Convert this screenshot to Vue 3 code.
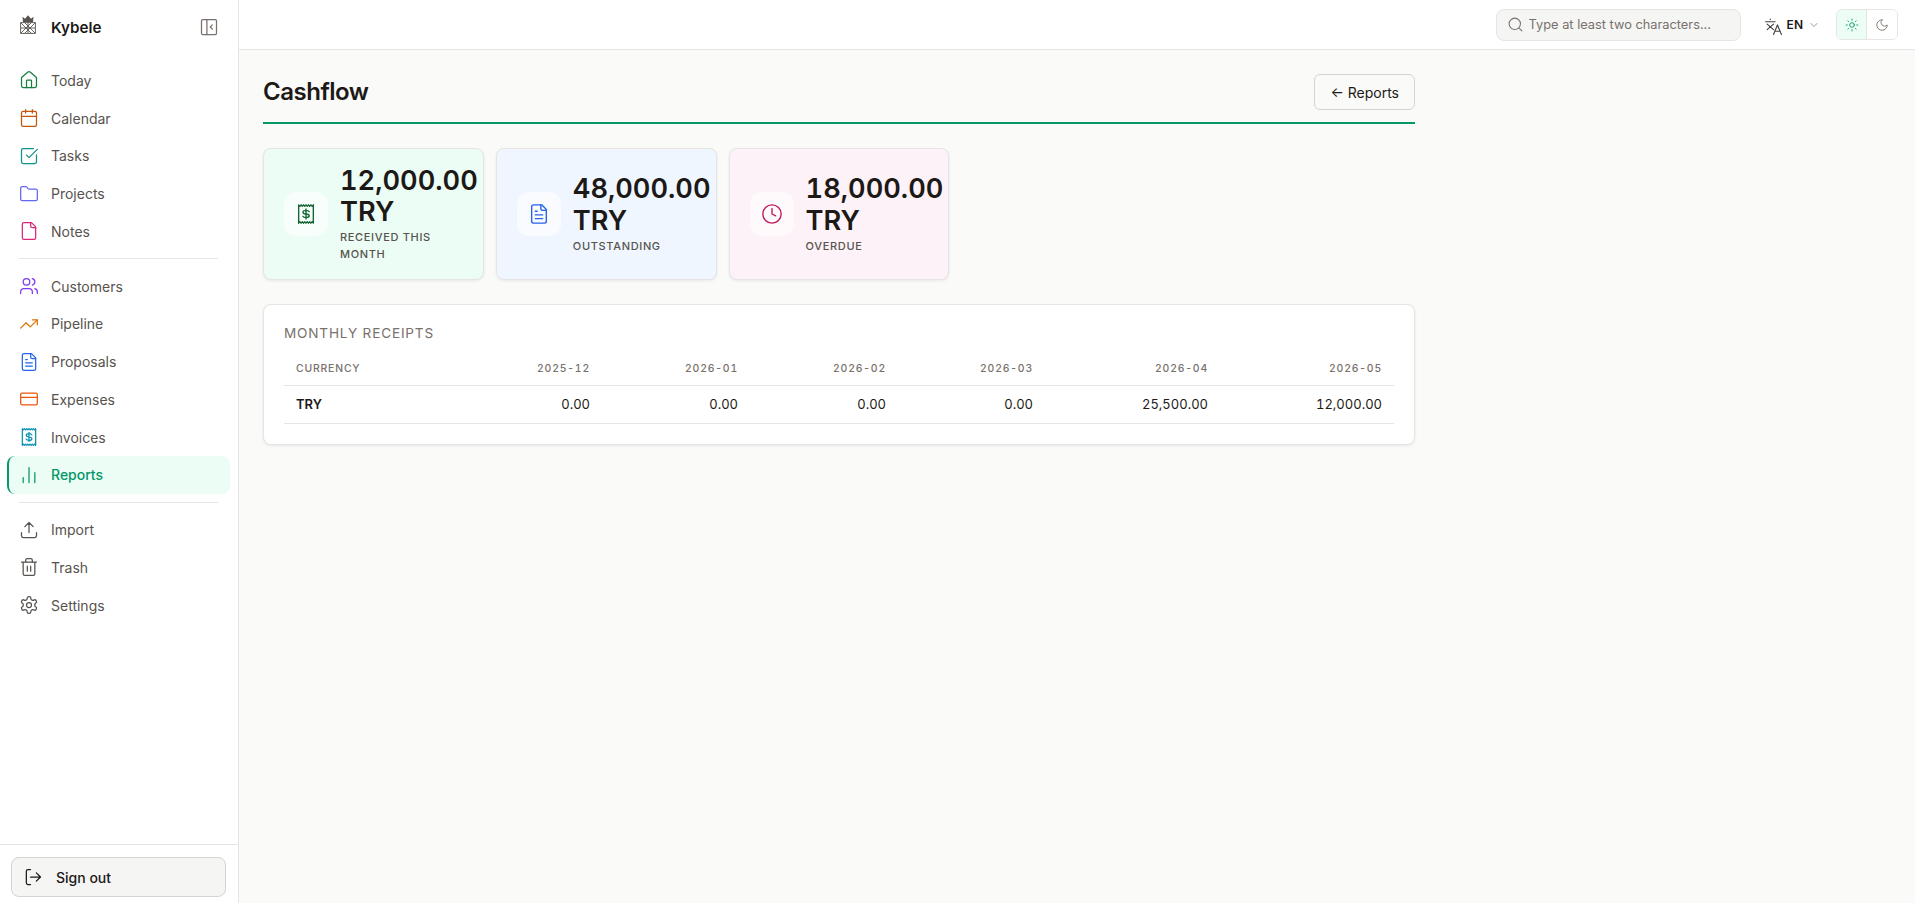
<template>
  <div class="app">
    <aside class="sidebar">
      <div class="brand">
        <svg class="logo" viewBox="0 0 16 19">
          <path class="logo-crown" d="M3 7 2.500 1.800l2.500 2L8 .2l3 3.600 2.500-2L13 7z" />
          <path d="M.6 7.600h14.800v10.800H.6zM.6 7.600l10.800 10.800M4.600 7.600l10.800 10.800M15.400 7.600 4.600 18.400M11.400 7.600.6 18.400M8 7.600v10.800M.6 13h14.800" />
        </svg>
        <span class="brand-name">Kybele</span>
        <svg class="icon collapse" viewBox="0 0 24 24">
          <path d="M4.500 3h15A1.500 1.500 0 0 1 21 4.500v15a1.500 1.500 0 0 1-1.500 1.500h-15A1.500 1.500 0 0 1 3 19.500v-15A1.500 1.500 0 0 1 4.500 3z" />
          <path d="M9.500 3v18M16 9.500 13.500 12l2.500 2.500" />
        </svg>
      </div>

      <nav class="nav">
        <template v-for="(group, g) in navGroups" :key="g">
          <div v-if="g > 0" class="divider"></div>
          <a
            v-for="item in group"
            :key="item.label"
            class="nav-item"
            :class="{ active: item.active }"
          >
            <svg class="icon" :class="item.color" viewBox="0 0 24 24">
              <path v-for="d in icons[item.icon]" :key="d" :d="d" />
            </svg>
            <span>{{ item.label }}</span>
          </a>
        </template>
      </nav>

      <div class="sidebar-foot">
        <button class="signout">
          <svg class="icon" viewBox="0 0 24 24">
            <path d="M9 21H6a2 2 0 0 1-2-2V5a2 2 0 0 1 2-2h3M16 17l5-5-5-5M21 12H9" />
          </svg>
          <span>Sign out</span>
        </button>
      </div>
    </aside>

    <div class="main">
      <header class="topbar">
        <label class="search">
          <svg class="icon search-icon" viewBox="0 0 24 24">
            <path d="M19 11a8 8 0 1 1-16 0 8 8 0 0 1 16 0zM21 21l-4.300-4.300" />
          </svg>
          <input type="text" placeholder="Type at least two characters..." />
        </label>
        <div class="lang">
          <svg class="lang-icon" viewBox="0 0 24 24">
            <path d="M2 6h12M8 2.500v.5M4 9l8 7M12 9l-8 7M12 22l5-12 5 12M13.800 18h6.400" />
          </svg>
          <span>EN</span>
          <svg class="chev" viewBox="0 0 24 24"><path d="m6 9 6 6 6-6" /></svg>
        </div>
        <div class="theme">
          <button class="theme-btn on">
            <svg viewBox="0 0 24 24">
              <path d="M16 12a4 4 0 1 1-8 0 4 4 0 0 1 8 0zM12 2v2M12 20v2M4.900 4.900l1.400 1.400M17.700 17.700l1.400 1.400M2 12h2M20 12h2M6.300 17.700l-1.400 1.400M19.100 4.900l-1.400 1.400" />
            </svg>
          </button>
          <button class="theme-btn">
            <svg viewBox="0 0 24 24"><path d="M12 3a6 6 0 0 0 9 9 9 9 0 1 1-9-9z" /></svg>
          </button>
        </div>
      </header>

      <main class="content">
        <div class="page">
          <div class="page-head">
            <h1>Cashflow</h1>
            <button class="back">← Reports</button>
          </div>

          <div class="stats">
            <div v-for="s in stats" :key="s.label" class="stat" :class="s.tone">
              <div class="stat-icon">
                <svg class="icon-lg" viewBox="0 0 24 24">
                  <path v-for="d in icons[s.icon]" :key="d" :d="d" />
                </svg>
              </div>
              <div class="stat-text">
                <div class="stat-value">{{ s.value }}</div>
                <div class="stat-label">{{ s.label }}</div>
              </div>
            </div>
          </div>

          <section class="panel">
            <h2>Monthly receipts</h2>
            <table>
              <colgroup>
                <col v-for="w in colWidths" :key="w.id" :style="{ width: w.px + 'px' }" />
              </colgroup>
              <thead>
                <tr>
                  <th class="left">Currency</th>
                  <th v-for="m in months" :key="m">{{ m }}</th>
                </tr>
              </thead>
              <tbody>
                <tr>
                  <td class="left cur">TRY</td>
                  <td v-for="(v, i) in receipts" :key="i">{{ v }}</td>
                </tr>
              </tbody>
            </table>
          </section>
        </div>
      </main>
    </div>
  </div>
</template>

<script setup>
const filePath = 'M15 2H6a2 2 0 0 0-2 2v16a2 2 0 0 0 2 2h12a2 2 0 0 0 2-2V7z'
const foldPath = 'M14 2v4a2 2 0 0 0 2 2h4'

const icons = {
  house: [
    'M15 21v-8a1 1 0 0 0-1-1h-4a1 1 0 0 0-1 1v8',
    'M3 10a2 2 0 0 1 .709-1.528l7-6a2 2 0 0 1 2.582 0l7 6A2 2 0 0 1 21 10v9a2 2 0 0 1-2 2H5a2 2 0 0 1-2-2z'
  ],
  calendar: [
    'M8 2v4M16 2v4',
    'M5 4h14a2 2 0 0 1 2 2v14a2 2 0 0 1-2 2H5a2 2 0 0 1-2-2V6a2 2 0 0 1 2-2zM3 10h18'
  ],
  check: [
    'M21 10.656V19a2 2 0 0 1-2 2H5a2 2 0 0 1-2-2V5a2 2 0 0 1 2-2h12.344',
    'm9 11 3 3L22 4'
  ],
  folder: [
    'M20 20a2 2 0 0 0 2-2V8a2 2 0 0 0-2-2h-7.900a2 2 0 0 1-1.690-.9L9.600 3.900A2 2 0 0 0 7.930 3H4a2 2 0 0 0-2 2v13a2 2 0 0 0 2 2z'
  ],
  file: [filePath, foldPath],
  users: [
    'M16 21v-2a4 4 0 0 0-4-4H6a4 4 0 0 0-4 4v2',
    'M13 7a4 4 0 1 1-8 0 4 4 0 0 1 8 0z',
    'M22 21v-2a4 4 0 0 0-3-3.870M16 3.130a4 4 0 0 1 0 7.750'
  ],
  trend: ['M22 7l-8.500 8.500-5-5L2 17', 'M16 7h6v6'],
  fileText: [filePath, foldPath, 'M10 9H8M16 13H8M16 17H8'],
  card: [
    'M4 5h16a2 2 0 0 1 2 2v10a2 2 0 0 1-2 2H4a2 2 0 0 1-2-2V7a2 2 0 0 1 2-2zM2 10h20'
  ],
  receipt: [
    'M4 2l1.330 1.500L6.660 2 8 3.500 9.330 2l1.330 1.500L12 2l1.330 1.500L14.670 2 16 3.500 17.330 2l1.340 1.500L20 2v20l-1.330-1.500-1.340 1.500L16 20.500 14.670 22l-1.340-1.500L12 22l-1.330-1.500L9.330 22 8 20.500 6.670 22l-1.340-1.500L4 22z',
    'M12 6.500v11M15.500 9.500c-.5-1-1.800-1.500-3.500-1.500-1.900 0-3.300.8-3.300 2s1.400 1.800 3.300 2 3.500.8 3.500 2-1.500 2-3.500 2-3-.5-3.500-1.500'
  ],
  chart: ['M5 21v-6M12 21V3M19 21V9'],
  upload: [
    'M21 15v4a2 2 0 0 1-2 2H5a2 2 0 0 1-2-2v-4',
    'M17 8l-5-5-5 5M12 3v12'
  ],
  trash: [
    'M3 6h18M19 6v14c0 1-1 2-2 2H7c-1 0-2-1-2-2V6',
    'M8 6V4c0-1 1-2 2-2h4c1 0 2 1 2 2v2M10 11v6M14 11v6'
  ],
  gear: [
    'M12.220 2h-.44a2 2 0 0 0-2 2v.18a2 2 0 0 1-1 1.730l-.43.25a2 2 0 0 1-2 0l-.15-.08a2 2 0 0 0-2.730.73l-.22.38a2 2 0 0 0 .73 2.730l.15.1a2 2 0 0 1 1 1.720v.51a2 2 0 0 1-1 1.740l-.15.09a2 2 0 0 0-.73 2.730l.22.38a2 2 0 0 0 2.730.73l.15-.08a2 2 0 0 1 2 0l.43.25a2 2 0 0 1 1 1.730V20a2 2 0 0 0 2 2h.44a2 2 0 0 0 2-2v-.18a2 2 0 0 1 1-1.730l.43-.25a2 2 0 0 1 2 0l.15.08a2 2 0 0 0 2.730-.73l.22-.39a2 2 0 0 0-.73-2.730l-.15-.08a2 2 0 0 1-1-1.740v-.5a2 2 0 0 1 1-1.740l.15-.09a2 2 0 0 0 .73-2.730l-.22-.38a2 2 0 0 0-2.730-.73l-.15.08a2 2 0 0 1-2 0l-.43-.25a2 2 0 0 1-1-1.730V4a2 2 0 0 0-2-2z',
    'M15 12a3 3 0 1 1-6 0 3 3 0 0 1 6 0z'
  ],
  clock: [
    'M22 12a10 10 0 1 1-20 0 10 10 0 0 1 20 0z',
    'M12 6v6l4 2'
  ]
}

const navGroups = [
  [
    { label: 'Today', icon: 'house', color: 'c-green' },
    { label: 'Calendar', icon: 'calendar', color: 'c-rust' },
    { label: 'Tasks', icon: 'check', color: 'c-teal' },
    { label: 'Projects', icon: 'folder', color: 'c-indigo' },
    { label: 'Notes', icon: 'file', color: 'c-pink' }
  ],
  [
    { label: 'Customers', icon: 'users', color: 'c-violet' },
    { label: 'Pipeline', icon: 'trend', color: 'c-amber' },
    { label: 'Proposals', icon: 'fileText', color: 'c-blue' },
    { label: 'Expenses', icon: 'card', color: 'c-orange' },
    { label: 'Invoices', icon: 'receipt', color: 'c-cyan' },
    { label: 'Reports', icon: 'chart', color: 'c-brand', active: true }
  ],
  [
    { label: 'Import', icon: 'upload' },
    { label: 'Trash', icon: 'trash' },
    { label: 'Settings', icon: 'gear' }
  ]
]

const stats = [
  { value: '12,000.00 TRY', label: 'Received this month', icon: 'receipt', tone: 'green' },
  { value: '48,000.00 TRY', label: 'Outstanding', icon: 'fileText', tone: 'blue' },
  { value: '18,000.00 TRY', label: 'Overdue', icon: 'clock', tone: 'pink' }
]

const months = ['2025-12', '2026-01', '2026-02', '2026-03', '2026-04', '2026-05']
const receipts = ['0.00', '0.00', '0.00', '0.00', '25,500.00', '12,000.00']
const colWidths = [170, 148, 148, 148, 147, 175, 174].map((px, id) => ({ id, px }))
</script>

<style>
html,
body {
  margin: 0;
  background: #fafaf9;
}
</style>

<style scoped>
.app {
  display: flex;
  height: 100vh;
  font-family: Inter, "Liberation Sans", sans-serif;
  color: #1c1917;
  background: #fafaf9;
  overflow: hidden;
}

svg {
  fill: none;
  stroke: currentColor;
  stroke-width: 1.5;
  stroke-linecap: round;
  stroke-linejoin: round;
  flex: none;
}

.icon {
  width: 20px;
  height: 20px;
}

.icon-lg {
  width: 22px;
  height: 22px;
}

/* sidebar */
.sidebar {
  width: 239px;
  flex: none;
  box-sizing: border-box;
  display: flex;
  flex-direction: column;
  background: #fff;
  border-right: 1px solid #e7e5e4;
}

.brand {
  height: 54px;
  display: flex;
  align-items: center;
  padding: 0 19px 0 20px;
}

.logo {
  width: 16px;
  height: 19px;
  margin-right: 15px;
  margin-top: -6px;
  color: #57534e;
  stroke-width: 0.9;
  stroke-linecap: butt;
}

.logo-crown {
  fill: #57534e;
  stroke: none;
}

.brand-name {
  font-size: 15.200px;
  font-weight: 600;
  flex: 1;
}

.collapse {
  color: #78716c;
}

.nav {
  flex: 1;
  padding: 7.500px 8px 0 7px;
}

.nav-item {
  height: 37.750px;
  box-sizing: border-box;
  display: flex;
  align-items: center;
  gap: 12px;
  padding-left: 12px;
  font-size: 14px;
  color: #57534e;
  border-radius: 8px;
}

.nav-item.active {
  padding-left: 10px;
  background: #ecfdf5;
  color: #059669;
  font-weight: 500;
  border-left: 2px solid #059669;
}

.divider {
  height: 1px;
  background: #e7e5e4;
  margin: 8px 12px;
}

.c-green { color: #15803d; }
.c-rust { color: #c2560c; }
.c-teal { color: #0d9488; }
.c-indigo { color: #6366f1; }
.c-pink { color: #db2777; }
.c-violet { color: #7c3aed; }
.c-amber { color: #d97706; }
.c-blue { color: #2563eb; }
.c-orange { color: #ea580c; }
.c-cyan { color: #0891b2; }
.c-brand { color: #059669; }

.sidebar-foot {
  border-top: 1px solid #e7e5e4;
  padding: 12px 12px 6px 11px;
}

.signout {
  width: 100%;
  height: 40px;
  display: flex;
  align-items: center;
  gap: 13px;
  padding: 0 11px;
  background: #f5f5f4;
  border: 1px solid #d6d3d1;
  border-radius: 8px;
  font: 500 14px Inter, "Liberation Sans", sans-serif;
  color: #1c1917;
  box-sizing: border-box;
}

/* topbar */
.main {
  flex: 1;
  min-width: 0;
  display: flex;
  flex-direction: column;
}

.topbar {
  height: 50px;
  flex: none;
  box-sizing: border-box;
  display: flex;
  align-items: center;
  justify-content: flex-end;
  padding: 0 17px 0 0;
  background: #fff;
  border-bottom: 1px solid #e7e5e4;
}

.search {
  width: 245px;
  height: 32px;
  box-sizing: border-box;
  display: flex;
  align-items: center;
  gap: 5px;
  padding: 0 10px;
  background: #f5f5f4;
  border: 1px solid #e7e5e4;
  border-radius: 8px;
}

.search-icon {
  width: 17px;
  height: 17px;
  color: #78716c;
}

.search input {
  flex: 1;
  min-width: 0;
  border: 0;
  outline: 0;
  padding: 0;
  background: transparent;
  font: 400 12.800px Inter, "Liberation Sans", sans-serif;
  color: #1c1917;
}

.search input::placeholder {
  color: #78716c;
  opacity: 1;
}

.lang {
  display: flex;
  align-items: center;
  margin-left: 23px;
  font-size: 12px;
  font-weight: 600;
}

.lang-icon {
  width: 19px;
  height: 19px;
  margin-top: 3px;
  color: #44403c;
  stroke-width: 1.4;
  margin-right: 4px;
}

.chev {
  width: 12px;
  height: 12px;
  color: #78716c;
  margin-left: 5px;
}

.theme {
  display: flex;
  margin-left: 16px;
  border: 1px solid #e7e5e4;
  border-radius: 6px;
  overflow: hidden;
}

.theme-btn {
  width: 30px;
  height: 29px;
  padding: 0;
  display: flex;
  align-items: center;
  justify-content: center;
  background: #fff;
  border: 0;
  color: #78716c;
}

.theme-btn svg {
  width: 14px;
  height: 14px;
}

.theme-btn.on {
  background: #ecfdf5;
  color: #059669;
  border-right: 1px solid #e7e5e4;
}

/* page */
.content {
  flex: 1;
  padding: 24px;
}

.page {
  max-width: 1152px;
}

.page-head {
  display: flex;
  align-items: center;
  justify-content: space-between;
  padding-bottom: 12px;
  border-bottom: 2px solid #059669;
  margin-bottom: 24px;
}

h1 {
  margin: 0 0 2px;
  font-size: 24px;
  font-weight: 600;
  letter-spacing: -0.02em;
}

.back {
  height: 36px;
  padding: 0 15px;
  background: transparent;
  border: 1px solid #d6d3d1;
  border-radius: 6px;
  font: 400 14px Inter, "Liberation Sans", sans-serif;
  color: #1c1917;
}

.stats {
  display: grid;
  grid-template-columns: repeat(auto-fill, minmax(220px, 1fr));
  gap: 12px;
  margin-bottom: 24px;
}

.stat {
  display: flex;
  align-items: center;
  gap: 12px;
  padding: 15.500px 20px;
  border: 1px solid #e7e5e4;
  border-radius: 8px;
  box-shadow: 0 1px 3px rgba(0, 0, 0, 0.08);
}

.stat.green { background: #ecfdf5; }
.stat.blue { background: #eff6ff; }
.stat.pink { background: #fdf2f8; }
.stat.green .stat-icon { color: #166534; }
.stat.blue .stat-icon { color: #2563eb; }
.stat.pink .stat-icon { color: #be185d; }

.stat-icon {
  width: 44px;
  height: 44px;
  flex: none;
  display: flex;
  align-items: center;
  justify-content: center;
  background: rgba(255, 255, 255, 0.6);
  border-radius: 12px;
}

.stat-value {
  font-size: 27.200px;
  font-weight: 560;
  line-height: 31.500px;
  font-variant-numeric: tabular-nums;
}

.stat-label {
  margin-top: 1.500px;
  font-size: 11px;
  font-weight: 500;
  line-height: 17px;
  letter-spacing: 0.06em;
  text-transform: uppercase;
  color: #57534e;
}

.panel {
  padding: 20px;
  background: #fff;
  border: 1px solid #e7e5e4;
  border-radius: 8px;
  box-shadow: 0 1px 3px rgba(0, 0, 0, 0.08);
}

h2 {
  margin: 0 0 11px;
  font-size: 13.600px;
  font-weight: 400;
  line-height: 17px;
  letter-spacing: 0.06em;
  text-transform: uppercase;
  color: #78716c;
}

table {
  width: 100%;
  border-collapse: collapse;
  table-layout: fixed;
}

th,
td {
  padding: 0 12px;
  text-align: right;
  border-bottom: 1px solid #e7e5e4;
}

th {
  height: 32px;
  font-size: 10.400px;
  font-weight: 500;
  letter-spacing: 0.08em;
  text-transform: uppercase;
  color: #78716c;
  font-variant-numeric: tabular-nums;
}

td {
  height: 37px;
  font-size: 13px;
  font-variant-numeric: tabular-nums;
}

.left {
  text-align: left;
}

.cur {
  font-weight: 600;
}
</style>
